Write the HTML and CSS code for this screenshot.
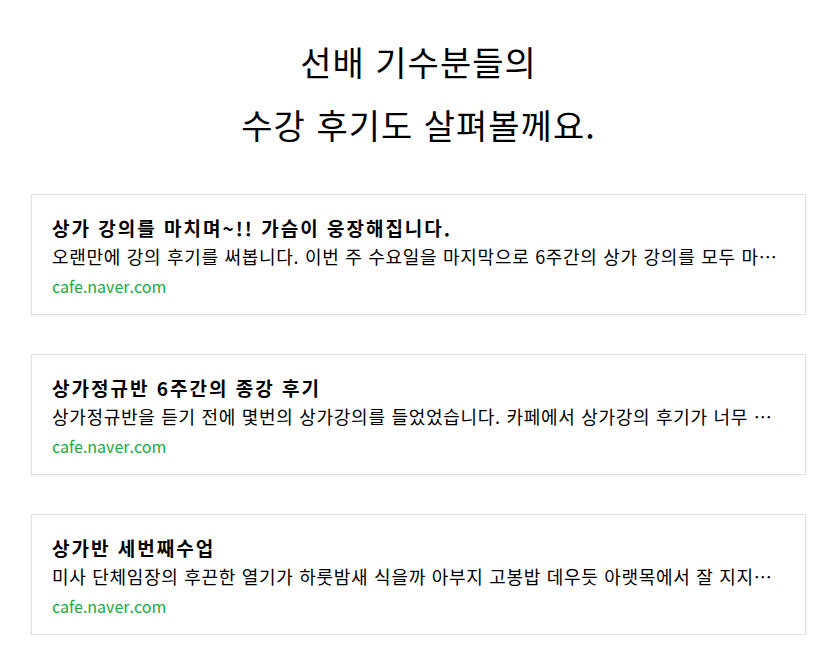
FILE: index.html
```html
<!DOCTYPE html>
<html lang="ko">
<head>
<meta charset="utf-8">
<link rel="stylesheet" href="styles.css">
</head>
<body>
<main class="page">
  <h1 class="heading">선배 기수분들의<br>수강 후기도 살펴볼께요.</h1>
  <ul class="reviews">
    <li class="card">
      <div class="card-title">상가 강의를 마치며~!! 가슴이 웅장해집니다.</div>
      <div class="card-desc">오랜만에 강의 후기를 써봅니다. 이번 주 수요일을 마지막으로 6주간의 상가 강의를 모두 마치게 되었습니다. 그동안 정말 많은 것을 배웠습니다.</div>
      <div class="card-link">cafe.naver.com</div>
    </li>
    <li class="card">
      <div class="card-title">상가정규반 6주간의 종강 후기</div>
      <div class="card-desc">상가정규반을 듣기 전에 몇번의 상가강의를 들었었습니다. 카페에서 상가강의 후기가 너무 좋아서 신청하게 되었습니다.</div>
      <div class="card-link">cafe.naver.com</div>
    </li>
    <li class="card">
      <div class="card-title">상가반 세번째수업</div>
      <div class="card-desc">미사 단체임장의 후끈한 열기가 하룻밤새 식을까 아부지 고봉밥 데우듯 아랫목에서 잘 지지고 왔습니다.</div>
      <div class="card-link">cafe.naver.com</div>
    </li>
  </ul>
</main>
</body>
</html>
```
FILE: styles.css
```css
html, body {
  margin: 0;
  padding: 0;
  background: #fff;
}
body {
  font-family: "Noto Sans CJK KR", "Noto Sans", sans-serif;
  color: #000;
}
.page {
  padding: 30px 27px 0 31px;
}
.heading {
  margin: 0 0 38px;
  text-align: center;
  font-size: 34px;
  letter-spacing: 1px;
  font-weight: 400;
  line-height: 63px;
}
.reviews {
  list-style: none;
  margin: 0;
  padding: 0;
  display: flex;
  flex-direction: column;
  gap: 39px;
}
.card {
  border: 1px solid #e3e3e3;
  box-shadow: 0 1px 4px rgba(0, 0, 0, 0.06);
  padding: 19px 20px 20px;
  box-sizing: border-box;
  height: 121px;
}
.card-title {
  font-size: 19px;
  letter-spacing: 2px;
  font-weight: 700;
  line-height: 28px;
  white-space: nowrap;
  overflow: hidden;
  text-overflow: ellipsis;
}
.card-desc {
  font-size: 18px;
  letter-spacing: 0.7px;
  line-height: 28px;
  white-space: nowrap;
  overflow: hidden;
  text-overflow: ellipsis;
}
.card-link {
  font-size: 16px;
  line-height: 32px;
  color: #22a845;
}
```
